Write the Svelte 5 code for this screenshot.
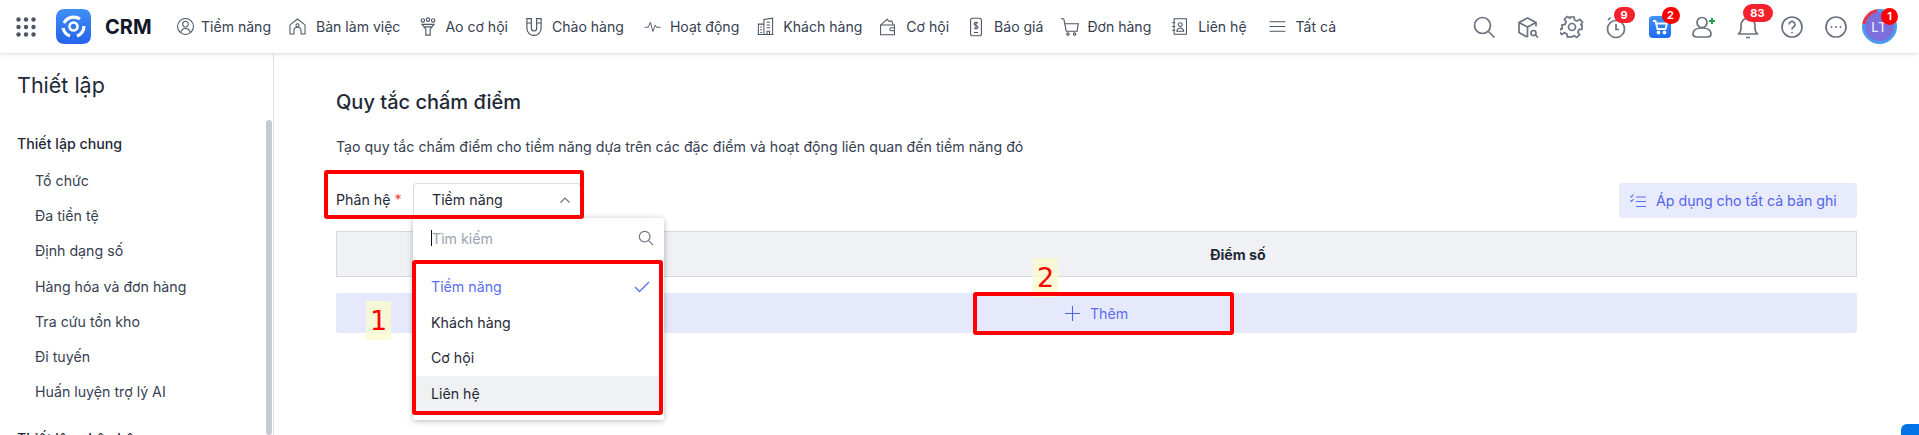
<script>
	const nav = [
		{ label: 'Tiềm năng', w: 19, h: 19, gap: 6, mr: 17, vb: '0 0 24 24', d: 'M22 12a10 10 0 1 1-20 0a10 10 0 0 1 20 0zM15.5 9a3.5 3.5 0 1 1-7 0a3.5 3.5 0 0 1 7 0zM6 19.5c.8-3.5 3.2-5 6-5s5.2 1.5 6 5' },
		{ label: 'Bàn làm việc', w: 19, h: 19, gap: 9, mr: 20, vb: '0 0 24 24', d: 'M2.5 21.5V10L12 2.5 21.5 10v11.5h-5v-4a4.5 4.5 0 0 0-9 0v4zM14 10.500a2 2 0 1 1-4 0a2 2 0 0 1 4 0z' },
		{ label: 'Ao cơ hội', w: 16, h: 19, gap: 9, mr: 18, vb: '3 1 18 22', d: 'M5 9.500h14l-4.500 5.500v7h-5v-7zM8 12.500h8M8 5a2 2 0 1 1-4 0a2 2 0 0 1 4 0zM14 4a2 2 0 1 1-4 0a2 2 0 0 1 4 0zM20 5a2 2 0 1 1-4 0a2 2 0 0 1 4 0z' },
		{ label: 'Chào hàng', w: 16, h: 20, gap: 10, mr: 20, vb: '3 1 18 22', d: 'M4 2.500h5v11a3 3 0 0 0 6 0v-11h5v11a8 8 0 0 1-16 0zM4 7.500h5M15 7.500h5' },
		{ label: 'Hoạt động', w: 17, h: 17, gap: 9, mr: 17, vb: '0 0 24 24', d: 'M1 13h5l3-7 3.500 13 3.500-9 1.500 3h6' },
		{ label: 'Khách hàng', w: 19, h: 19, gap: 8, mr: 17, vb: '0 0 24 24', d: 'M10 22V3l11-1.500V22zM3 22V9h7M2 22h20M13.500 6.500h4M13.500 10h4M13.500 13.500h4M14 22v-4h3v4M5.500 12.500h2M5.500 16h2M5.500 19.500h2' },
		{ label: 'Cơ hội', w: 17, h: 18, gap: 10, mr: 20, vb: '1 1 22 22', d: 'M3 9.500h18v12.500H3zM3 9.500L11.500 2l3 3 3-1 2 5.500M21 13h-4a2 2 0 0 0 0 4h4' },
		{ label: 'Báo giá', w: 14, h: 20, gap: 11, mr: 17, vb: '4.500 0 15 24', d: 'M8 1.500h8a2.500 2.500 0 0 1 2.500 2.500v16a2.500 2.500 0 0 1-2.500 2.500H8A2.500 2.500 0 0 1 5.500 20V4A2.500 2.500 0 0 1 8 1.500zM14.500 7.500c-.5-1-4.800-1.500-4.800 1 0 2.500 4.800 1 4.800 3.500s-4.300 2-4.800 1M12 5.500v9.500M9.500 18.500h5' },
		{ label: 'Đơn hàng', w: 20, h: 20, gap: 7, mr: 20, vb: '0 0 24 24', d: 'M1 2h3.500l3 15h13l1.500-9H5.500M11 20.500a1.500 1.500 0 1 1-3 0a1.500 1.500 0 0 1 3 0zM19 20.500a1.500 1.500 0 1 1-3 0a1.500 1.500 0 0 1 3 0z' },
		{ label: 'Liên hệ', w: 17, h: 19, gap: 10, mr: 21, vb: '1 1 22 22', d: 'M5 2h16v20H5zM2.500 7h4M2.500 12h4M2.500 17h4M15.500 9.500a2.500 2.500 0 1 1-5 0a2.500 2.500 0 0 1 5 0zM8.500 18c.5-3 2-4 4.500-4s4 1 4.500 4z' },
		{ label: 'Tất cả', w: 19, h: 19, gap: 9, mr: 0, vb: '0 0 24 24', d: 'M2 6h20M2 12h20M2 18h20' }
	];
	const general = ['Tổ chức', 'Đa tiền tệ', 'Định dạng số', 'Hàng hóa và đơn hàng', 'Tra cứu tồn kho', 'Đi tuyến', 'Huấn luyện trợ lý AI'];
	const modules = ['Tiềm năng', 'Khách hàng', 'Cơ hội', 'Liên hệ'];
</script>

<div class="shell">
	<header class="topbar">
		<svg class="grid" viewBox="0 0 20 20" width="20" height="20">
			{#each [2.500, 10, 17.500] as cy}
				{#each [2.500, 10, 17.500] as cx}
					<circle {cx} {cy} r="2.200" />
				{/each}
			{/each}
		</svg>
		<div class="logo">
			<svg viewBox="0 0 35 35" width="35" height="35">
				<defs>
					<linearGradient id="lg" x1="0" y1="0" x2="0" y2="1">
						<stop offset="0" stop-color="#3f8ff5" />
						<stop offset="1" stop-color="#2563eb" />
					</linearGradient>
				</defs>
				<path d="M9 0h17c6 0 9 3 9 9v17c0 6-3 9-9 9H9c-6 0-9-3-9-9V9c0-6 3-9 9-9z" fill="url(#lg)" />
				<path d="M8 14a11 11 0 0 1 16-4M28 17a11 11 0 0 1-7 10M7 19a11 11 0 0 0 7 8" fill="none" stroke="#fff" stroke-width="3.200" />
				<circle cx="17.500" cy="17.500" r="4" fill="none" stroke="#fff" stroke-width="2.600" />
			</svg>
		</div>
		<b class="brand">CRM</b>
		<nav class="nav">
			{#each nav as n}
				<span class="nav-item" style="margin-right:{n.mr}px;gap:{n.gap}px">
					<svg viewBox={n.vb} width={n.w} height={n.h} fill="none" stroke="#4b5563" stroke-width="1.300"><path d={n.d} /></svg>
					{n.label}
				</span>
			{/each}
		</nav>
		<div class="tools">
			<span class="tool"><svg viewBox="0 0 24 24" width="24" height="24" class="ic"><circle cx="10.500" cy="10.500" r="8" /><path d="M16.500 16.500l6 6" /></svg></span>
			<span class="tool"><svg viewBox="0 0 24 24" width="24" height="24" class="ic"><path d="M11 22l-8-4.500v-10L11.500 3l8.500 4.500v4M3 7.500l8.500 4.500 8.500-4.500M11.500 12v10" /><circle cx="17.500" cy="18" r="2.500" /><path d="M19.500 20l2.500 2.500" /></svg></span>
			<span class="tool"><svg viewBox="0 0 24 24" width="24" height="24" class="ic"><circle cx="12" cy="12" r="3.500" /><path d="M10 2h4l.6 3 2.500 1.100 2.600-1.700 2.800 2.800-1.700 2.600L21 10l1 0v4l-3 .6-1.100 2.500 1.700 2.600-2.800 2.800-2.600-1.700-2.200 1-.6 0h-4l-.6-3-2.500-1.100-2.600 1.700-2.800-2.800 1.700-2.600L3 14l-1 0v-4l3-.6 1.100-2.500L4.400 4.300l2.800-2.800L9.800 3.200z" /></svg></span>
			<span class="tool"><svg viewBox="0 0 24 24" width="24" height="24" class="ic"><circle cx="12" cy="14" r="8.500" /><path d="M12 9v5.500h3M4 5l2.500-2.500" /></svg><i class="badge b-timer">9</i></span>
			<span class="tool">
				<span class="cart">
					<svg viewBox="0 0 22 22" width="22" height="22" fill="none" stroke="#fff" stroke-width="1.800"><path d="M4 5h2.500l2 8h8l1.500-5.500H7" /><circle cx="9.500" cy="16.500" r="1" /><circle cx="15.500" cy="16.500" r="1" /></svg>
				</span>
				<i class="badge b-cart">2</i>
			</span>
			<span class="tool"><svg viewBox="0 0 26 24" width="26" height="24" class="ic"><circle cx="11" cy="7.500" r="5" /><path d="M2 19c0-4 4-6 9-6s9 2 9 6c0 2-2 3-4 3H6c-2 0-4-1-4-3z" /><path class="plus" d="M21 3v6M18 6h6" /></svg></span>
			<span class="tool"><svg viewBox="0 0 24 24" width="24" height="24" class="ic"><path d="M2 19c2-1 3-3 3-6V10a7 7 0 0 1 14 0v3c0 3 1 5 3 6zM10 22.500h4" /></svg><i class="badge b-bell">83</i></span>
			<span class="tool"><svg viewBox="0 0 24 24" width="24" height="24" class="ic"><circle cx="12" cy="12" r="10" /><path d="M9 9.500a3 3 0 1 1 4.500 2.600c-1 .6-1.500 1.200-1.500 2.400M12 17v1.200" /></svg></span>
			<span class="tool"><svg viewBox="0 0 24 24" width="24" height="24" class="ic"><circle cx="12" cy="12" r="10" /><circle class="dot" cx="7.500" cy="12" r="1" /><circle class="dot" cx="12" cy="12" r="1" /><circle class="dot" cx="16.500" cy="12" r="1" /></svg></span>
			<span class="tool">
				<span class="ring"><span class="avatar">LT</span></span>
				<i class="badge b-avatar">1</i>
			</span>
		</div>
	</header>

	<div class="body">
		<aside class="sidebar">
			<h2>Thiết lập</h2>
			<div class="side-scroll">
				<div class="side-list">
					<div class="group first">Thiết lập chung</div>
					{#each general as g}
						<div class="side-item">{g}</div>
					{/each}
					<div class="group next">Thiết lập phân hệ</div>
				</div>
				<div class="thumb"></div>
			</div>
		</aside>

		<main class="main">
			<h1>Quy tắc chấm điểm</h1>
			<p class="desc">Tạo quy tắc chấm điểm cho tiềm năng dựa trên các đặc điểm và hoạt động liên quan đến tiềm năng đó</p>

			<div class="toolbar">
				<div class="field">Phân hệ <em>*</em></div>
				<div class="select">
					<span>Tiềm năng</span>
					<svg viewBox="0 0 12 8" width="12" height="8" fill="none" stroke="#6b7280" stroke-width="1.200"><path d="M1.500 6.500L6 2l4.500 4.500" /></svg>
					<div class="dropdown">
						<div class="search">
							<span class="caret"></span><span class="ph">Tìm kiếm</span>
							<svg viewBox="0 0 18 18" width="16" height="16" fill="none" stroke="#6b7280" stroke-width="1.300"><circle cx="7.500" cy="7.500" r="6" /><path d="M12 12l5 5" /></svg>
						</div>
						<div class="options">
							{#each modules as m, i}
								<div class="opt" class:on={i === 0} class:hover={i === 3}>
									{m}
									{#if i === 0}
										<svg viewBox="0 0 16 12" width="16" height="12" fill="none" stroke="#5b6ef0" stroke-width="1.300"><path d="M1 6l4.500 4.500L15 1" /></svg>
									{/if}
								</div>
							{/each}
						</div>
					</div>
				</div>
				<button class="apply">
					<svg viewBox="0 0 16 14" width="16" height="14" fill="none" stroke="#5b6ef0" stroke-width="1.100"><path d="M6 3h10M6 7.500h10M6 12.500h10M.5 2l1 1L3.500.5M.5 6.500l1 1 2-2.500" /></svg>
					Áp dụng cho tất cả bản ghi
				</button>
			</div>

			<div class="thead">Điểm số</div>
			<div class="add">
				<svg viewBox="0 0 16 16" width="15" height="15" fill="none" stroke="#4f63e7" stroke-width="1.100"><path d="M8 0v16M0 8h16" /></svg>
				Thêm
			</div>
		</main>
	</div>

	<!-- tutorial marks drawn on top of the screenshot -->
	<div class="mark m-select"></div>
	<div class="mark m-list"></div>
	<div class="mark m-add"></div>
	<div class="num n1">1</div>
	<div class="num n2">2</div>
	<div class="chat"></div>
</div>

<style>
	:global(body) { margin: 0; background: #fff; }
	.shell {
		position: relative;
		width: 1919px;
		height: 435px;
		overflow: hidden;
		font-family: Inter, "Noto Sans", sans-serif;
		font-size: 14.200px;
		color: #1f2937;
	}
	.topbar {
		position: relative;
		z-index: 2;
		display: flex;
		align-items: center;
		height: 53px;
		padding-left: 16px;
		box-sizing: border-box;
		background: #fff;
		box-shadow: 0 1px 4px rgba(0, 0, 0, 0.14);
	}
	.grid { fill: #4b5563; flex: none; }
	.logo { margin-left: 20px; height: 35px; flex: none; }
	.brand { margin-left: 14px; font-size: 20px; font-weight: 700; color: #111827; width: 71px; flex: none; }
	.nav { display: flex; align-items: center; }
	.nav-item { display: flex; align-items: center; white-space: nowrap; color: #374151; font-size: 14.050px; }
	.nav-item svg { flex: none; }
	.tools { margin-left: auto; margin-right: 17.500px; display: flex; align-items: center; }
	.tool { position: relative; width: 44px; height: 53px; display: flex; justify-content: center; align-items: center; }
	.ic { fill: none; stroke: #6b7280; stroke-width: 1.700; }
	.ic .dot { fill: #6b7280; stroke: none; }
	.plus { stroke: #16a34a; stroke-width: 2; }
	.badge {
		position: absolute;
		font-style: normal;
		font-weight: 700;
		font-size: 11px;
		color: #fff;
		background: #f5222d;
		border-radius: 9px;
		text-align: center;
	}
	.b-timer { top: 7px; left: 20px; width: 21px; height: 16px; line-height: 16px; }
	.b-cart { top: 7px; left: 24px; width: 18px; height: 17px; line-height: 17px; background: #f00; }
	.b-bell { top: 4px; left: 17px; width: 30px; height: 18px; line-height: 18px; }
	.b-avatar { top: 8px; left: 23.500px; width: 17px; height: 17px; line-height: 17px; background: #f00; }
	.cart {
		width: 22px;
		height: 22px;
		border-radius: 4px;
		background: linear-gradient(#3f90f5, #1e6bf0);
		display: block;
	}
	.ring {
		width: 35px;
		height: 35px;
		border-radius: 50%;
		padding: 3px;
		box-sizing: border-box;
		background: conic-gradient(#4a9af0 0 280deg, #ef3340 280deg 350deg, #4a9af0 350deg);
	}
	.avatar {
		width: 100%;
		height: 100%;
		border-radius: 50%;
		background: #7b6fdc;
		color: #e8e6fa;
		font-size: 13px;
		font-weight: 500;
		letter-spacing: 1px;
		display: flex;
		align-items: center;
		justify-content: center;
	}
	.body { display: flex; height: 382px; }
	.sidebar {
		width: 273px;
		flex: none;
		border-right: 1px solid #dcdfe4;
		display: flex;
		flex-direction: column;
	}
	.sidebar h2 { margin: 19px 0 0 17px; font-size: 21.500px; line-height: 26px; font-weight: 400; color: #1f2937; }
	.side-scroll { position: relative; flex: 1; margin-top: 21px; overflow: hidden; }
	.side-list { padding: 14px 0 0 17px; }
	.group { font-weight: 500; line-height: 22px; }
	.group.first { margin-bottom: 15px; }
	.group.next { margin-top: 25px; }
	.side-item { padding-left: 18px; line-height: 22px; margin-bottom: 13.200px; color: #374151; }
	.thumb { position: absolute; top: 1px; bottom: 0; right: 1px; width: 6px; border-radius: 3px; background: #c5cad6; }
	.main { flex: 1; padding: 36px 62px 0 62px; min-width: 0; }
	h1 { margin: 0; font-size: 20px; line-height: 27px; font-weight: 500; color: #1f2937; }
	.desc { margin: 21px 0 0; line-height: 20px; color: #374151; }
	.toolbar { display: flex; align-items: flex-start; height: 35px; margin-top: 26px; }
	.field { width: 77px; flex: none; line-height: 33px; }
	.field em { color: #ef4444; font-style: normal; }
	.select {
		position: relative;
		width: 168px;
		height: 34px;
		box-sizing: border-box;
		border: 1px solid #d8dbe0;
		border-bottom: none;
		border-radius: 4px 4px 0 0;
		display: flex;
		align-items: center;
		justify-content: space-between;
		padding: 0 9px 2px 18px;
	}
	.dropdown {
		position: absolute;
		z-index: 3;
		top: 34px;
		left: -1px;
		width: 251px;
		height: 202px;
		background: #fff;
		border-radius: 3px;
		box-shadow: 0 1px 6px rgba(0, 0, 0, 0.28);
		color: #1f2937;
	}
	.search { height: 40px; display: flex; align-items: center; padding: 0 10px 0 18px; }
	.caret { width: 1px; height: 16px; background: #111; }
	.ph { flex: 1; color: #9ca3af; }
	.options { padding-top: 11px; }
	.opt { height: 35.500px; display: flex; align-items: center; justify-content: space-between; padding: 0 14px 0 18px; }
	.opt.on { color: #5b6ef0; }
	.opt.hover { background: #f0f1f3; }
	.apply {
		margin-left: auto;
		width: 238px;
		height: 35px;
		border: none;
		border-radius: 4px;
		background: #e8eafd;
		color: #5366e9;
		font: inherit;
		display: flex;
		align-items: center;
		gap: 10px;
		padding: 0 0 0 11px;
	}
	.thead {
		margin-top: 13px;
		height: 46px;
		box-sizing: border-box;
		border: 1px solid #d4d7dd;
		background: #f0f1f4;
		padding-left: 283px;
		display: flex;
		align-items: center;
		justify-content: center;
		font-weight: 700;
		color: #1f2937;
	}
	.add {
		margin-top: 16px;
		height: 40px;
		border-radius: 3px;
		background: #e6e8fc;
		color: #5b6ef0;
		display: flex;
		align-items: center;
		justify-content: center;
		gap: 10px;
	}
	.mark { position: absolute; z-index: 5; box-sizing: border-box; border: 4px solid #f00; border-radius: 3px; }
	.m-select { left: 324px; top: 170px; width: 260px; height: 49px; }
	.m-list { left: 412px; top: 260px; width: 251px; height: 155px; }
	.m-add { left: 973px; top: 292px; width: 261px; height: 43px; }
	.num {
		position: absolute;
		z-index: 4;
		width: 25px;
		height: 39px;
		background: rgba(250, 250, 205, 0.8);
		color: #f00;
		font-family: "DejaVu Sans", sans-serif;
		font-size: 27px;
		line-height: 39px;
		text-align: center;
	}
	.n1 { left: 366px; top: 301px; }
	.n2 { left: 1033px; top: 258px; }
	.chat { position: absolute; left: 1901px; top: 424px; width: 18px; height: 11px; background: #0073e6; border-radius: 6px 0 0 0; }
</style>
